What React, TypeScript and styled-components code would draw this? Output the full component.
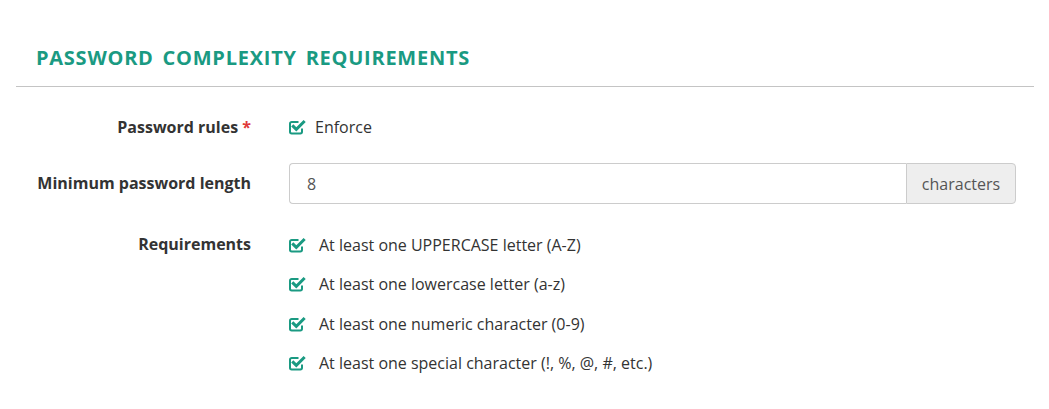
import React from "react";
import styled, { createGlobalStyle } from "styled-components";

const Global = createGlobalStyle`
  html, body { margin: 0; padding: 0; background: #fff; }
  body { font-family: "Open Sans", "DejaVu Sans", sans-serif; color: #333; }
`;

const Page = styled.div`
  padding: 43px 15px 0 16px;
`;

const Title = styled.h3`
  margin: 0;
  padding: 0 0 14px 20px;
  font-size: 20px;
  font-weight: 700;
  color: #1a9a82;
  word-spacing: 3px;
  letter-spacing: 0.75px;
  border-bottom: 1px solid #c4c4c4;
  line-height: 29px;
`;

const Form = styled.div`
  display: grid;
  grid-template-columns: 235px 1fr;
  column-gap: 38px;
  padding-top: 28px;
  padding-right: 18px;
`;

const Label = styled.div<{ $top?: number }>`
  text-align: right;
  font-weight: 700;
  font-size: 16px;
  color: #333;
  line-height: 24px;
  padding-top: ${(p) => p.$top ?? 0}px;
`;

const Star = styled.span`
  color: #e03a3a;
`;

const Field = styled.div<{ $top?: number }>`
  display: flex;
  flex-direction: column;
  gap: 15.3px;
  padding-top: ${(p) => p.$top ?? 0}px;
`;

const CheckRow = styled.div<{ $gap?: number }>`
  display: flex;
  align-items: center;
  gap: ${(p) => p.$gap ?? 13}px;
  font-size: 16px;
  line-height: 24px;
  color: #333;
`;

const InputGroup = styled.div`
  display: flex;
  height: 41px;
  margin: 24px 0 28px 0;
`;

const Input = styled.div`
  flex: 1;
  border: 1px solid #ccc;
  border-right: none;
  border-radius: 4px 0 0 4px;
  display: flex;
  align-items: center;
  padding-left: 17px;
  font-size: 16px;
  color: #555;
  box-sizing: border-box;
`;

const Addon = styled.div`
  width: 110px;
  box-sizing: border-box;
  border: 1px solid #ccc;
  border-radius: 0 4px 4px 0;
  background: #eee;
  display: flex;
  align-items: center;
  justify-content: center;
  font-size: 16px;
  color: #555;
`;

const Icon = styled.svg`
  width: 17px;
  height: 16px;
  flex: none;
`;

const CheckIcon = () => (
  <Icon viewBox="0 0 17 16">
    <path
      d="M13 9.5 V12.8 a1.7 1.7 0 0 1 -1.7 1.7 H2.7 A1.7 1.7 0 0 1 1 12.8 V4.7 A1.7 1.7 0 0 1 2.7 3 H9.5"
      fill="none"
      stroke="#1a9a82"
      strokeWidth="2"
    />
    <path
      d="M4.3 7.4 L7.3 10.4 L14.6 3.1"
      fill="none"
      stroke="#1a9a82"
      strokeWidth="3"
      strokeLinecap="square"
    />
  </Icon>
);

const reqs = [
  "At least one UPPERCASE letter (A-Z)",
  "At least one lowercase letter (a-z)",
  "At least one numeric character (0-9)",
  "At least one special character (!, %, @, #, etc.)",
];

export default function App() {
  return (
    <Page>
      <Global />
      <Title>PASSWORD COMPLEXITY REQUIREMENTS</Title>
      <Form>
        <Label>
          Password rules <Star>*</Star>
        </Label>
        <Field>
          <CheckRow $gap={9}>
            <CheckIcon />
            Enforce
          </CheckRow>
        </Field>
        <Label $top={32}>Minimum password length</Label>
        <InputGroup>
          <Input>8</Input>
          <Addon>characters</Addon>
        </InputGroup>
        <Label>Requirements</Label>
        <Field $top={1}>
          {reqs.map((r) => (
            <CheckRow key={r}>
              <CheckIcon />
              {r}
            </CheckRow>
          ))}
        </Field>
      </Form>
    </Page>
  );
}
